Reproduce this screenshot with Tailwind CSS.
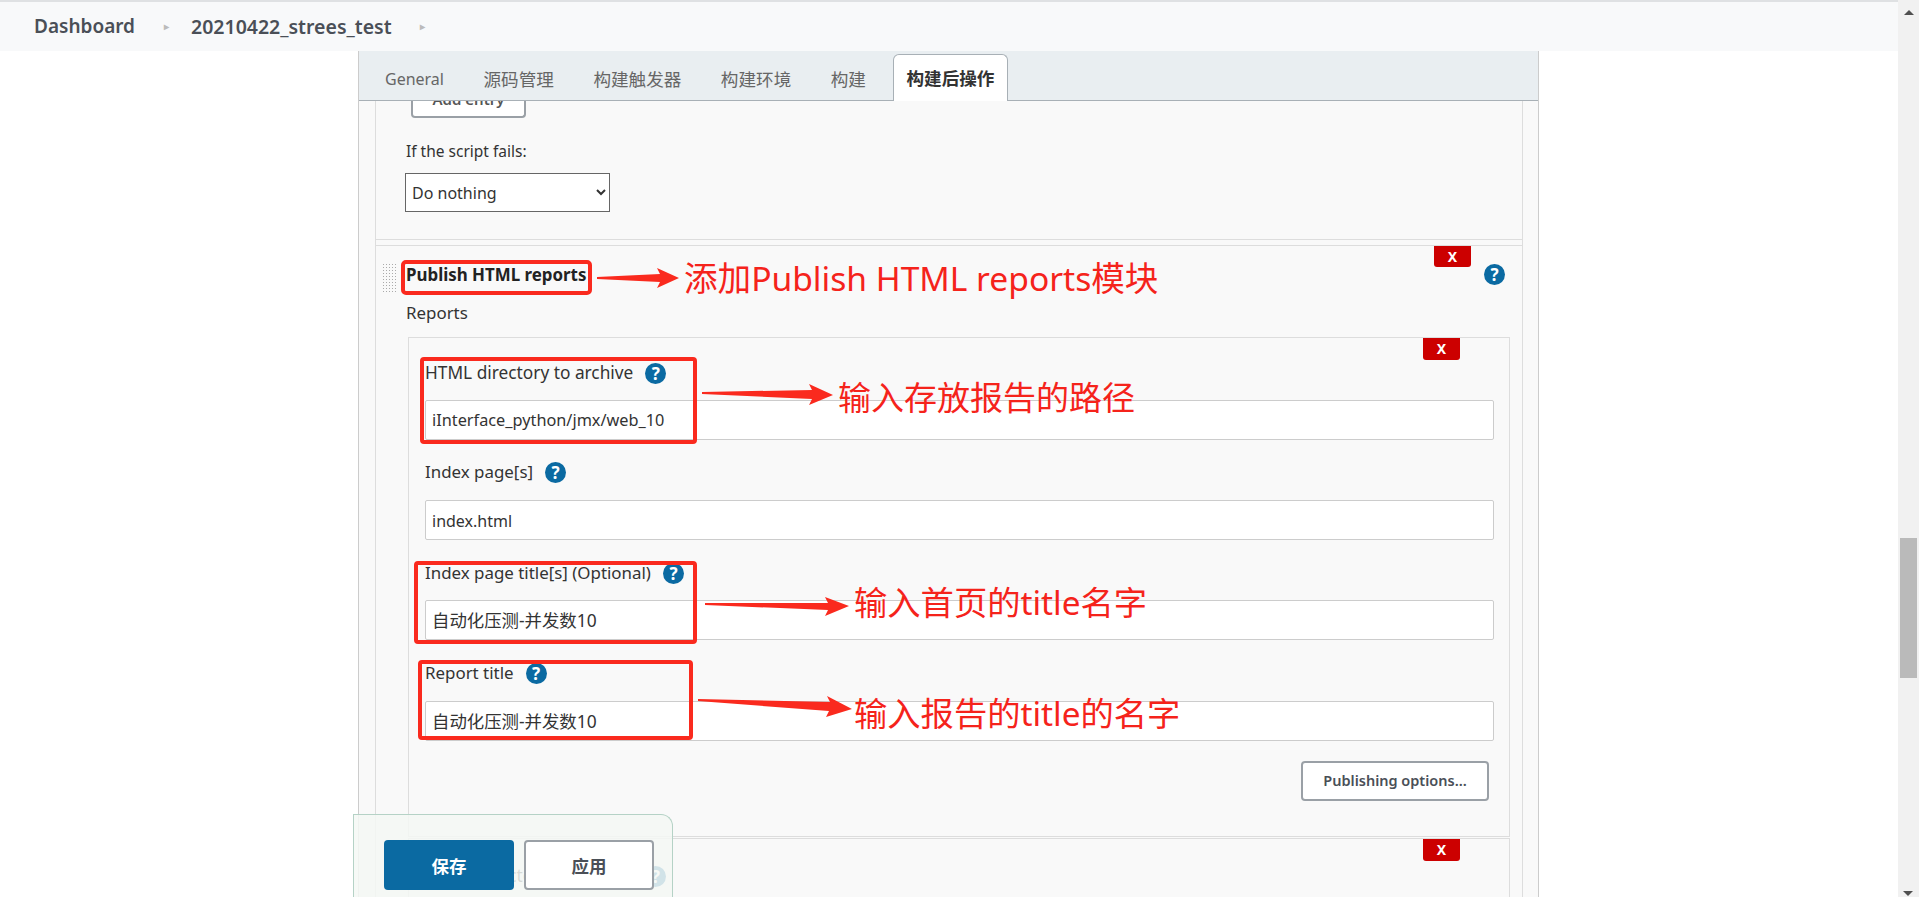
<!DOCTYPE html>
<html lang="zh-CN">
<head>
  <meta charset="UTF-8" />
  <title>20210422_strees_test Config</title>
  <script src="https://cdn.jsdelivr.net/npm/@tailwindcss/browser@4"></script>
</head>
<body class="relative h-[897px] overflow-hidden bg-white text-[#333] font-['Noto_Sans','Noto_Sans_CJK_SC',sans-serif] text-[16.9px]">
  <div class="flex h-[897px]">
    <div class="w-[1898px] flex flex-col overflow-hidden">

      <!-- breadcrumb -->
      <div class="h-[51px] shrink-0 border-t-2 border-[#dfe1e3] bg-[#f8f9fa] flex items-center pl-[34px] text-[19px] font-semibold text-[#4a4f57]">
        <span>Dashboard</span>
        <span class="ml-[29px] text-[10px] text-[#bbb]">&#9656;</span>
        <span class="ml-[22px] text-[19.5px]">20210422_strees_test</span>
        <span class="ml-[28px] text-[10px] text-[#bbb]">&#9656;</span>
      </div>

      <!-- config card -->
      <div class="ml-[358px] w-[1181px] flex-1 flex flex-col border-x border-[#ccc] bg-[#f9f9f9] overflow-hidden">
        <div class="h-[50px] shrink-0 bg-[#e9eef1] border-b border-[#a8b0b6] flex items-end pl-[26px] text-[17.6px] text-[#666]">
          <div class="flex gap-[39.5px] h-[42px] items-center">
            <span class="text-[16px]">General</span>
            <span>源码管理</span>
            <span>构建触发器</span>
            <span>构建环境</span>
            <span>构建</span>
          </div>
          <div class="ml-[27px] w-[115px] h-[47px] -mb-px bg-white border border-b-0 border-[#a8b0b6] rounded-t-md flex items-center justify-center font-bold text-[#333]">构建后操作</div>
        </div>

        <div class="relative flex-1 overflow-hidden ml-[16px] mr-[15px] border-x border-[#ddd]">
          <div class="-mt-[7px] ml-[35px] w-[115px] h-[24px] bg-white border-2 border-t-0 border-[#9aa0a6] rounded-b-[4px] flex items-start justify-center text-[15px] leading-[12px] font-semibold text-[#555] overflow-hidden">
            <span class="-mt-px">Add entry</span>
          </div>

          <div class="border-b border-[#ddd] h-[122px] pl-[30px] pt-[21px]">
            <div class="leading-[24px] text-[15.5px]">If the script fails:</div>
            <select class="mt-[10px] -ml-px w-[205px] h-[39px] pl-[2px] bg-white border border-[#666] text-[16px] text-[#333]">
              <option>Do nothing</option>
            </select>
          </div>

          <!-- Publish HTML reports -->
          <div class="relative mt-[5px] border-t border-[#ddd] pl-[30px] h-[700px]">
            <div class="absolute left-[6px] top-[17px] w-[14px] h-[30px] bg-[radial-gradient(#aaa_1px,transparent_1px)] bg-[length:3px_3px]"></div>
            <div class="absolute right-[51px] top-0 w-[37px] h-[21px] bg-[#cc0000] rounded-b-[3px] flex items-center justify-center text-white text-[14px] leading-none font-bold">X</div>
            <div class="absolute right-[17px] top-[18px] w-[21px] h-[21px] rounded-full bg-[#0b6aa2] flex items-center justify-center text-white text-[17px] leading-none font-bold">?</div>

            <div class="pt-[17px] leading-[24px] font-bold text-[#222]">Publish HTML reports</div>
            <div class="mt-[14px] leading-[24px]">Reports</div>

            <div class="relative mt-[12px] ml-[2px] mr-[12px] h-[500px] border border-[#ddd] pl-[16px] pr-[15px]">
              <div class="absolute right-[49px] top-0 w-[37px] h-[22px] bg-[#cc0000] rounded-b-[3px] flex items-center justify-center text-white text-[14px] leading-none font-bold">X</div>

              <div class="mt-[23px] h-[24px] flex items-center gap-[12px]">
                <span class="text-[17.3px]">HTML directory to archive</span>
                <span class="w-[21px] h-[21px] rounded-full bg-[#0b6aa2] flex items-center justify-center text-white text-[17px] leading-none font-bold">?</span>
              </div>
              <div class="mt-[15px] h-[40px] bg-white border border-[#ccc] rounded-[2px] flex items-center pl-[6px] text-[16.3px]">iInterface_python/jmx/web_10</div>

              <div class="mt-[20px] h-[24px] flex items-center gap-[12px]">
                <span>Index page[s]</span>
                <span class="w-[21px] h-[21px] rounded-full bg-[#0b6aa2] flex items-center justify-center text-white text-[17px] leading-none font-bold">?</span>
              </div>
              <div class="mt-[16px] h-[40px] bg-white border border-[#ccc] rounded-[2px] flex items-center pl-[6px] pt-[2px] text-[16px]">index.html</div>

              <div class="mt-[21px] h-[24px] flex items-center gap-[12px]">
                <span>Index page title[s] (Optional)</span>
                <span class="w-[21px] h-[21px] rounded-full bg-[#0b6aa2] flex items-center justify-center text-white text-[17px] leading-none font-bold">?</span>
              </div>
              <div class="mt-[15px] h-[40px] bg-white border border-[#ccc] rounded-[2px] flex items-center pl-[6px] text-[17.4px]">自动化压测-并发数10</div>

              <div class="mt-[21px] h-[24px] flex items-center gap-[12px]">
                <span>Report title</span>
                <span class="w-[21px] h-[21px] rounded-full bg-[#0b6aa2] flex items-center justify-center text-white text-[17px] leading-none font-bold">?</span>
              </div>
              <div class="mt-[16px] h-[40px] bg-white border border-[#ccc] rounded-[2px] flex items-center pl-[6px] text-[17.4px]">自动化压测-并发数10</div>

              <div class="mt-[20px] flex justify-end pr-[5px]">
                <div class="w-[188px] h-[40px] bg-white border-2 border-[#9aa0a6] rounded-[4px] flex items-center justify-center text-[14.5px] font-semibold text-[#4a4f57]">Publishing options...</div>
              </div>
            </div>

            <div class="relative mt-[1px] ml-[2px] mr-[12px] h-[100px] border border-[#ddd] pl-[16px]">
              <div class="absolute right-[49px] top-0 w-[37px] h-[22px] bg-[#cc0000] rounded-b-[3px] flex items-center justify-center text-white text-[14px] leading-none font-bold">X</div>
              <div class="mt-[25px] h-[24px] flex items-center gap-[12px]">
                <span class="text-[17.3px]">HTML directory to archive</span>
                <span class="w-[21px] h-[21px] rounded-full bg-[#0b6aa2] flex items-center justify-center text-white text-[17px] leading-none font-bold">?</span>
              </div>
            </div>
          </div>
        </div>
      </div>
    </div>

    <!-- scrollbar -->
    <div class="relative w-[21px] bg-[#f1f1f1]">
      <div class="absolute left-[6px] top-[10px] w-0 h-0 border-x-[5px] border-x-transparent border-b-[5px] border-b-[#505050]"></div>
      <div class="absolute left-[2px] top-[538px] w-[17px] h-[140px] bg-[#bababa]"></div>
      <div class="absolute left-[5px] bottom-[1px] w-0 h-0 border-x-[5px] border-x-transparent border-t-[5px] border-t-[#505050]"></div>
    </div>
  </div>

  <!-- sticky save bar -->
  <div class="absolute left-[353px] top-[814px] w-[320px] h-[83px] bg-[#f4f8f4]/85 border border-b-0 border-[#b5d2c6] rounded-tr-[12px] flex items-start gap-[10px] pl-[30px] pt-[25px]">
    <div class="w-[130px] h-[50px] pt-[3px] bg-[#0b6aa2] rounded-[4px] flex items-center justify-center text-white text-[17.5px] font-bold">保存</div>
    <div class="w-[130px] h-[50px] pt-[3px] bg-white border-2 border-[#9aa0a6] rounded-[4px] flex items-center justify-center text-[#4a4f57] text-[17.5px] font-bold">应用</div>
  </div>

  <!-- red annotations drawn over the screenshot -->
  <div class="absolute left-[401px] top-[260px] w-[191px] h-[35px] border-[4px] border-[#fa2a1e] rounded-[5px]"></div>
  <div class="absolute left-[420px] top-[357px] w-[277px] h-[87px] border-[4px] border-[#fa2a1e] rounded-[4px]"></div>
  <div class="absolute left-[414px] top-[561px] w-[283px] h-[83px] border-[4px] border-[#fa2a1e] rounded-[4px]"></div>
  <div class="absolute left-[418px] top-[660px] w-[275px] h-[80px] border-[4px] border-[#fa2a1e] rounded-[4px]"></div>

  <svg class="absolute left-0 top-0 pointer-events-none" width="1919" height="897" fill="#fa2a1e">
    <polygon points="597,277 660,274 657,268 679,278 657,288 660,282 597,279" />
    <polygon points="702,392 812,390 809,384 833,395 809,405 812,399 702,394" />
    <polygon points="705,603 828,603 825,597 849,606 825,616 828,610 705,605" />
    <polygon points="698,699 830,702 827,696 852,709 826,717 829,711 698,701" />
  </svg>

  <div class="absolute left-[684px] top-[254px] leading-[48px] text-[33.6px] text-[#f5231b] whitespace-nowrap">添加Publish HTML reports模块</div>
  <div class="absolute left-[838px] top-[374px] leading-[48px] text-[33px] text-[#f5231b] whitespace-nowrap">输入存放报告的路径</div>
  <div class="absolute left-[854px] top-[578px] leading-[48px] text-[33.3px] text-[#f5231b] whitespace-nowrap">输入首页的title名字</div>
  <div class="absolute left-[854px] top-[689px] leading-[48px] text-[33.3px] text-[#f5231b] whitespace-nowrap">输入报告的title的名字</div>
</body>
</html>
